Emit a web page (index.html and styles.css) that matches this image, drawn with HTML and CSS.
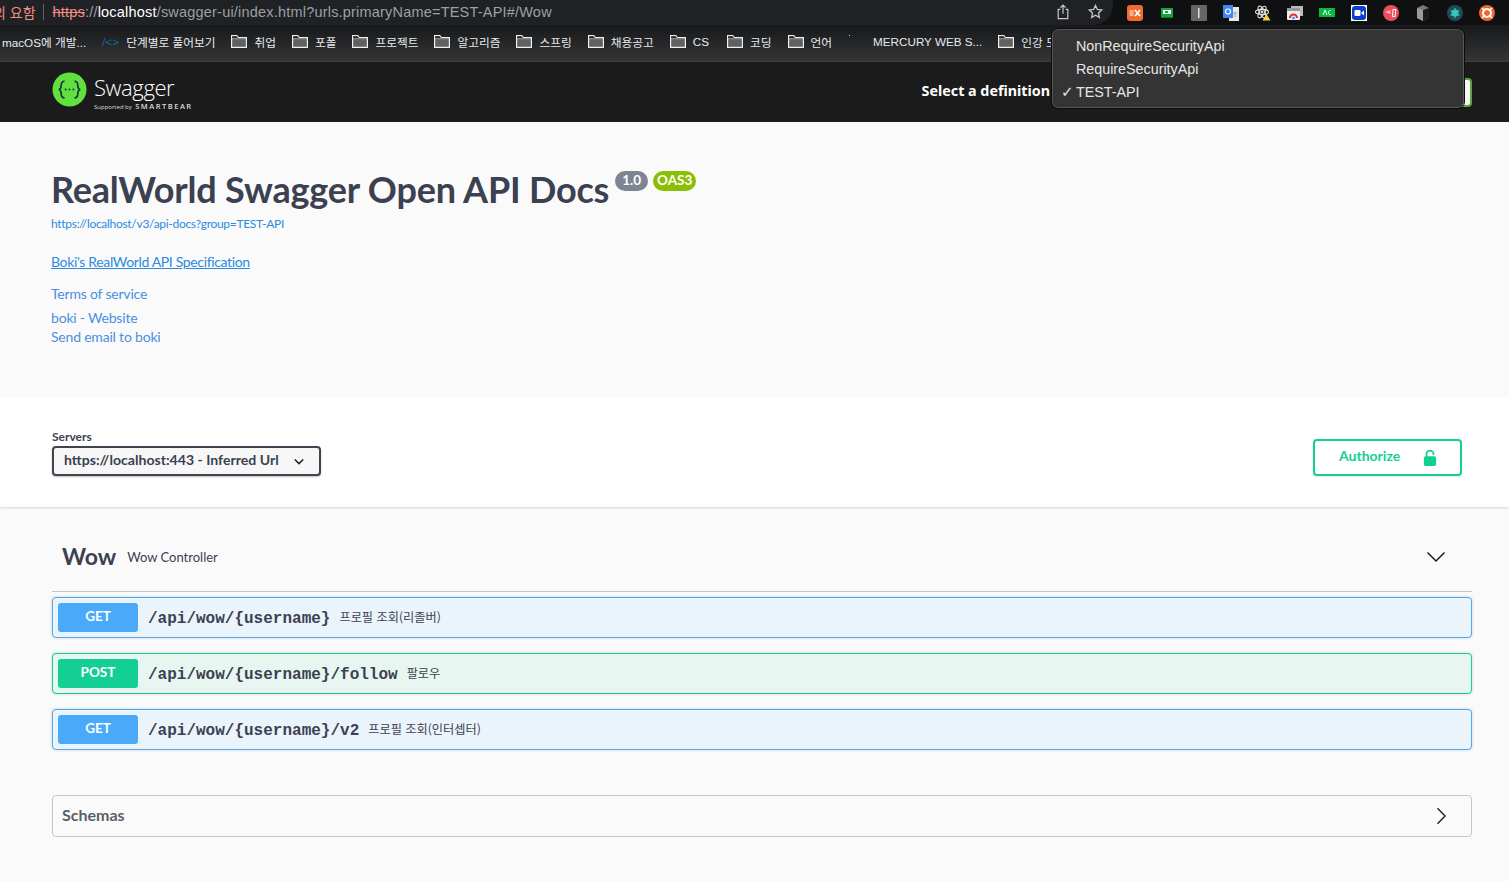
FILE: index.html
```html
<!DOCTYPE html>
<html lang="ko">
<head>
<meta charset="utf-8">
<title>Swagger UI</title>
<link rel="stylesheet" href="styles.css">
</head>
<body>
<header class="chrome">
  <div class="omni">
    <span class="warn">의 요함</span>
    <span class="sep"></span>
    <span class="url"><s class="proto">https</s><span class="dim">://</span><span class="host">localhost</span><span class="dim">/swagger-ui/index.html?urls.primaryName=TEST-API#/Wow</span></span>
    <span class="omni-actions">
      <svg class="act" viewBox="0 0 16 18" width="14" height="16"><path d="M5 6H2.500v10.500h11V6H11M8 11V1.500M5 4l3-3 3 3" fill="none" stroke="#c4c7c5" stroke-width="1.400"/></svg>
      <svg class="act" viewBox="0 0 16 16" width="15" height="15"><path d="M8 1.500l2 4.300 4.700.6-3.500 3.200.9 4.700L8 12l-4.100 2.300.9-4.700L1.300 6.400 6 5.800z" fill="none" stroke="#c4c7c5" stroke-width="1.400"/></svg>
    </span>
  </div>
  <div class="exts">
    <svg class="ext" viewBox="0 0 16 16"><rect width="16" height="16" rx="3" fill="#f26b2e"/><rect x="2.500" y="5" width="4" height="6" fill="#f9b08e"/><path d="M8 5l5 6M13 5l-5 6" stroke="#fff" stroke-width="1.800"/></svg>
    <svg class="ext" viewBox="0 0 16 16"><rect x="2" y="3" width="12" height="9" fill="#0fa83d"/><rect x="4" y="5" width="8" height="4" fill="#fff"/><rect x="6" y="6" width="3" height="2" fill="#0fa83d"/><rect x="2" y="12" width="12" height="1" fill="#0b7a2c"/></svg>
    <svg class="ext" viewBox="0 0 16 16"><rect width="16" height="16" rx="1" fill="#666"/><rect x="7" y="3" width="1.500" height="10" fill="#ddd"/></svg>
    <svg class="ext" viewBox="0 0 16 16"><rect x="6" y="2" width="10" height="14" fill="#e8e8e8"/><rect width="10" height="13" fill="#4285f4"/><circle cx="5" cy="6.500" r="2.500" fill="none" stroke="#fff" stroke-width="1.200"/><path d="M10 8h4M12 8v4" stroke="#8a9ab5"/></svg>
    <svg class="ext" viewBox="0 0 16 16"><g fill="none" stroke="#e4e4e4" stroke-width="1.100"><ellipse cx="7" cy="7" rx="6.500" ry="2.600"/><ellipse cx="7" cy="7" rx="6.500" ry="2.600" transform="rotate(60 7 7)"/><ellipse cx="7" cy="7" rx="6.500" ry="2.600" transform="rotate(120 7 7)"/></g><circle cx="7" cy="7" r="1.400" fill="#e4e4e4"/><path d="M11.500 9l4 6.500h-8z" fill="#f3d23c"/></svg>
    <svg class="ext" viewBox="0 0 16 16"><rect x="4" y="1" width="12" height="10" fill="#bbb"/><rect x="0" y="3" width="13" height="12" rx="1" fill="#eee"/><rect x="0" y="3" width="13" height="3" fill="#999"/><path d="M3 13a3.500 3.500 0 0 1 7 0" fill="none" stroke="#d33" stroke-width="2"/><circle cx="6.500" cy="13" r="1.300" fill="#4285f4"/></svg>
    <svg class="ext" viewBox="0 0 16 16"><rect y="3" width="16" height="9" fill="#09b83e"/><path d="M4 10l2-5 2 5M11.500 5.500h-1l-1 1v2l1 1h1.500" fill="none" stroke="#fff"/></svg>
    <svg class="ext" viewBox="0 0 16 16"><rect width="16" height="16" fill="#fff"/><rect x="1" y="1" width="14" height="14" rx="3" fill="#0b3fc9"/><rect x="3.500" y="5" width="6" height="6" rx="1" fill="#fff"/><path d="M10 8l3-2.500v5z" fill="#fff"/></svg>
    <svg class="ext" viewBox="0 0 16 16"><circle cx="8" cy="8" r="8" fill="#ee4d5a"/><path d="M2 7l6-2-1 2 1 2-4-1z" fill="#fbd"/><path d="M10 4.500h3l-1 7H9.500z" fill="none" stroke="#fff"/></svg>
    <svg class="ext" viewBox="0 0 16 16"><path d="M8 0l6 3v10l-6 3-6-3V3z" fill="#777"/><path d="M8 5l6-2v10l-6 3z" fill="#1b1b1b"/><path d="M2 3l6 2v11l-6-3z" fill="#9a9a9a"/></svg>
    <svg class="ext" viewBox="0 0 16 16"><circle cx="8" cy="8" r="8" fill="#214b56"/><circle cx="8" cy="8" r="3.500" fill="#37c8c0"/><path d="M8 3v10M3.700 5.500l8.600 5M3.700 10.500l8.600-5" stroke="#37c8c0" stroke-width="1.200"/></svg>
    <svg class="ext" viewBox="0 0 16 16"><circle cx="8" cy="8" r="8" fill="#f0672b"/><circle cx="8" cy="8" r="4" fill="none" stroke="#fff" stroke-width="2"/><path d="M3 3l3 3M13 3l-3 3M3 13l3-3M13 13l-3-3" stroke="#fff" stroke-width="1.600"/></svg>
  </div>
</header>

<nav class="bookmarks">
  <span class="bm first">macOS에 개발...</span>
  <span class="bm code"><i class="code-ic">/&lt;&gt;</i>단계별로 풀어보기</span>
  <span class="bm"><svg class="fd" viewBox="0 0 16 13"><use href="#folder"/></svg>취업</span>
  <span class="bm"><svg class="fd" viewBox="0 0 16 13"><use href="#folder"/></svg>포폴</span>
  <span class="bm"><svg class="fd" viewBox="0 0 16 13"><use href="#folder"/></svg>프로젝트</span>
  <span class="bm"><svg class="fd" viewBox="0 0 16 13"><use href="#folder"/></svg>알고리즘</span>
  <span class="bm"><svg class="fd" viewBox="0 0 16 13"><use href="#folder"/></svg>스프링</span>
  <span class="bm"><svg class="fd" viewBox="0 0 16 13"><use href="#folder"/></svg>채용공고</span>
  <span class="bm cs"><svg class="fd" viewBox="0 0 16 13"><use href="#folder"/></svg>CS</span>
  <span class="bm"><svg class="fd" viewBox="0 0 16 13"><use href="#folder"/></svg>코딩</span>
  <span class="bm"><svg class="fd" viewBox="0 0 16 13"><use href="#folder"/></svg>언어</span>
  <span class="bm merc">MERCURY WEB S...</span>
  <span class="bm"><svg class="fd" viewBox="0 0 16 13"><use href="#folder"/></svg>인강 모음</span>
</nav>

<svg class="defs" width="0" height="0">
  <symbol id="folder" viewBox="0 0 16 13"><path d="M.6 12.400V.6h5.200l1.400 2h8.200v9.800z" fill="#5f6062" stroke="#f0f0f0" stroke-width="1.200"/><path d="M.6 3.600h14.800" stroke="#f0f0f0" stroke-width="1"/><path d="M1.200 1.200h4.400l1.300 1.900h7.900v.4H1.200z" fill="#2a2b2d"/></symbol>
</svg>

<section class="topbar">
  <div class="logo">
    <svg class="logo-mark" viewBox="0 0 36 36" width="35" height="35">
      <circle cx="18" cy="18" r="17.500" fill="#62e03e"/>
      <path d="M13 9.500c-3 0-3.500 1.500-3.500 4 0 2.500-.5 4-2.500 4.500 2 .5 2.500 2 2.500 4.500 0 2.500.5 4 3.500 4M23 9.500c3 0 3.500 1.500 3.500 4 0 2.500.5 4 2.500 4.500-2 .5-2.500 2-2.500 4.500 0 2.500-.5 4-3.500 4" fill="none" stroke="#173647" stroke-width="1.700"/>
      <circle cx="14" cy="18" r="1" fill="#173647"/><circle cx="18" cy="18" r="1" fill="#173647"/><circle cx="22" cy="18" r="1" fill="#173647"/>
    </svg>
    <div class="logo-text">
      <span class="logo-name">Swagger</span>
      <span class="logo-sub"><small>Supported by</small> SMARTBEAR</span>
    </div>
  </div>
  <div class="def">
    <span class="def-label">Select a definition</span>
    <span class="def-box"></span>
  </div>
</section>

<section class="info">
  <div class="title-row">
    <h1 class="title">RealWorld Swagger Open API Docs</h1>
    <span class="badge grey">1.0</span>
    <span class="badge green">OAS3</span>
  </div>
  <a class="link spec-url">https://localhost/v3/api-docs?group=TEST-API</a>
  <a class="link desc">Boki's RealWorld API Specification</a>
  <a class="link plain terms">Terms of service</a>
  <a class="link plain site">boki - Website</a>
  <a class="link plain mail">Send email to boki</a>
</section>

<section class="scheme">
  <div class="servers">
    <span class="servers-label">Servers</span>
    <div class="select">
      <span>https://localhost:443 - Inferred Url</span>
      <svg viewBox="0 0 12 8" width="10" height="7"><path d="M1 1.500l5 5 5-5" fill="none" stroke="#222" stroke-width="1.800"/></svg>
    </div>
  </div>
  <button class="authorize">
    <span>Authorize</span>
    <svg viewBox="0 0 16 20" width="14" height="18"><path d="M4 9V5.500a4 4 0 0 1 8 0v1" fill="none" stroke="#13cf93" stroke-width="2"/><rect x="1" y="8" width="14" height="11" rx="2" fill="#13cf93"/></svg>
  </button>
</section>

<main class="ops">
  <div class="tag">
    <div class="tag-left"><h2>Wow</h2><span>Wow Controller</span></div>
    <svg viewBox="0 0 20 12" width="20" height="12"><path d="M1.500 1.500L10 10l8.500-8.500" fill="none" stroke="#1b1b1b" stroke-width="1.500"/></svg>
  </div>
  <div class="op get">
    <span class="method">GET</span>
    <span class="path">/api/wow/{username}</span>
    <span class="summary">프로필 조회(리졸버)</span>
  </div>
  <div class="op post">
    <span class="method">POST</span>
    <span class="path">/api/wow/{username}/follow</span>
    <span class="summary">팔로우</span>
  </div>
  <div class="op get">
    <span class="method">GET</span>
    <span class="path">/api/wow/{username}/v2</span>
    <span class="summary">프로필 조회(인터셉터)</span>
  </div>
  <div class="schemas">
    <span>Schemas</span>
    <svg viewBox="0 0 12 20" width="11" height="18"><path d="M1.500 1.500L10 10l-8.500 8.500" fill="none" stroke="#1b1b1b" stroke-width="1.500"/></svg>
  </div>
</main>

<div class="menu">
  <div class="menu-item">NonRequireSecurityApi</div>
  <div class="menu-item">RequireSecurityApi</div>
  <div class="menu-item checked">TEST-API</div>
</div>
</body>
</html>
```

FILE: styles.css
```css
* { box-sizing: border-box; }
html, body { margin: 0; padding: 0; }
body {
  width: 1509px;
  height: 881px;
  overflow: hidden;
  position: relative;
  background: #fafafa;
  font-family: Lato, "Noto Sans CJK KR", sans-serif;
  color: #3b4151;
}
.defs { position: absolute; }

/* browser chrome */
.chrome {
  height: 25px;
  background: #0f1011;
  display: flex;
  align-items: center;
}
.omni {
  width: 1113px;
  height: 25px;
  background: #202124;
  border-radius: 0 0 20px 0;
  display: flex;
  align-items: center;
  font-family: "Liberation Sans", "Noto Sans CJK KR", sans-serif;
  font-size: 14.500px;
  color: #9aa0a6;
  white-space: nowrap;
  padding-bottom: 2px;
}
.warn { color: #f28b82; font-size: 14px; margin-left: -7px; flex: none; }
.sep { width: 1px; height: 16px; background: #5f6368; margin: 0 9px 0 7px; flex: none; }
.url { flex: 1; letter-spacing: .2px; }
.proto { color: #f28b82; }
.host { color: #fff; }
.dim { color: #9aa0a6; }
.omni-actions { display: flex; align-items: center; gap: 18px; padding-right: 10px; }
.exts {
  display: flex;
  align-items: center;
  gap: 16px;
  padding-left: 14px;
}
.ext { width: 16px; height: 16px; display: block; }

/* bookmarks */
.bookmarks {
  height: 37px;
  background: linear-gradient(#18191a, #333436);
  border-bottom: 1px solid #3d3e40;
  display: flex;
  align-items: center;
  padding: 0 0 3px 2px;
  font-family: "Liberation Sans", "Noto Sans CJK KR", sans-serif;
  font-size: 11.700px;
  color: #e8eaed;
  white-space: nowrap;
  overflow: hidden;
  gap: 16px;
}
.bm { display: flex; align-items: center; gap: 7px; }
.fd { width: 16px; height: 13px; flex: none; }
.code-ic { color: #0b6aa8; font-style: normal; }
.cs { margin-right: 2px; }
.merc { margin-left: 25px; position: relative; }
.merc::before {
  content: "";
  position: absolute;
  left: -24px;
  top: 0;
  width: 1px;
  height: 1px;
  background: #ddd;
}

/* swagger topbar */
.topbar {
  height: 60px;
  background: #1b1b1b;
  display: flex;
  align-items: center;
  justify-content: space-between;
  padding: 0 37px 0 52px;
}
.logo { display: flex; align-items: center; gap: 7px; }
.logo-mark { display: block; margin-bottom: 6px; }
.logo-text { display: flex; flex-direction: column; color: #fff; line-height: 1; }
.logo-name { font-size: 22px; font-weight: 300; font-family: "Open Sans", sans-serif; letter-spacing: -.4px; margin-top: 2px; }
.logo-sub { font-size: 7.500px; font-weight: 600; font-family: "Open Sans", sans-serif; letter-spacing: 1.500px; margin-top: 5px; color: #ddd; }
.logo-sub small { font-size: 6px; letter-spacing: 0; font-weight: 400; }
.def { display: flex; align-items: center; }
.def-label { color: #fff; font-family: "Noto Sans", sans-serif; font-size: 14.300px; font-weight: 700; margin: 0 3px 3px 0; }
.def-box { width: 419px; height: 29px; background: #f7f7f7; border: 2px solid #62a03f; border-radius: 4px; }

/* info */
.info {
  height: 275px;
  padding: 50px 51px 0;
  display: flex;
  flex-direction: column;
  align-items: flex-start;
}
.title-row { display: flex; align-items: flex-start; height: 36px; }
.title { margin: -1px 0 0; font-size: 36px; line-height: 36px; font-weight: 700; letter-spacing: -.2px; color: #3b4151; }
.badge {
  display: block;
  color: #fff;
  font-size: 13.500px;
  font-weight: 700;
  line-height: 17px;
  padding: 1px 4px;
  border-radius: 57px;
  margin-top: -1px;
  height: 20px;
}
.grey { background: #7d8492; margin-left: 6px; padding: 1px 7px; }
.green { background: #89bf04; margin-left: 5px; }
.link { color: #4990e2; display: block; font-size: 14px; line-height: 19px; }
.spec-url { color: #2a8be0; font-size: 12px; letter-spacing: -.3px; line-height: 14px; margin-top: 9px; }
.desc { color: #2a8be0; font-size: 14px; letter-spacing: -.35px; text-decoration: underline; margin-top: 21px; }
.plain { color: #4990e2; font-size: 14px; letter-spacing: -.2px; }
.terms { margin-top: 13px; }
.site { margin-top: 5px; }

/* servers bar */
.scheme {
  height: 110px;
  background: #fff;
  box-shadow: 0 1px 2px rgba(0,0,0,.15);
  display: flex;
  justify-content: space-between;
  padding: 32px 47px 0 52px;
  position: relative;
}
.servers-label { display: block; font-size: 12px; font-weight: 700; line-height: 15px; margin-bottom: 2px; }
.select {
  width: 269px;
  height: 30px;
  background: #f7f7f7;
  border: 2px solid #41444e;
  border-radius: 4px;
  box-shadow: 0 1px 2px 0 rgba(0,0,0,.25);
  display: flex;
  align-items: center;
  justify-content: space-between;
  padding: 0 15px 3px 10px;
  font-size: 14.100px;
  font-weight: 700;
  white-space: nowrap;
}
.select svg { margin-top: 3px; }
.authorize {
  width: 149px;
  height: 37px;
  margin-top: 10px;
  background: transparent;
  border: 2px solid #13cf93;
  border-radius: 4px;
  display: flex;
  align-items: center;
  gap: 23px;
  padding: 0 0 0 24px;
  color: #13cf93;
  font: 700 14px Lato, sans-serif;
  box-shadow: 0 1px 2px rgba(0,0,0,.1);
}
.authorize span { margin-bottom: 5px; }

/* operations */
.ops { padding: 0 37px 0 52px; }
.tag {
  height: 85px;
  border-bottom: 1px solid #c4c5c9;
  display: flex;
  align-items: center;
  justify-content: space-between;
  padding: 16px 26px 0 10px;
}
.tag-left { display: flex; align-items: center; gap: 11px; margin-top: -3px; }
.tag-left h2 { margin: 0; font-size: 23px; font-weight: 700; color: #3b4151; }
.tag-left span { font-size: 13px; margin-top: 2px; }
.op {
  height: 41px;
  border: 1px solid;
  border-radius: 4px;
  box-shadow: 0 0 3px rgba(0,0,0,.19);
  display: flex;
  align-items: center;
  padding: 0 5px;
  margin-bottom: 15px;
}
.tag + .op { margin-top: 5px; }
.get { background: #ebf3fb; border-color: #49aafa; }
.post { background: #e7f6f0; border-color: #13cf93; }
.method {
  width: 80px;
  height: 29px;
  border-radius: 3px;
  color: #fff;
  font-size: 13.500px;
  font-weight: 700;
  display: flex;
  align-items: center;
  justify-content: center;
  padding-bottom: 3px;
}
.get .method { background: #49aafa; }
.post .method { background: #13cf93; }
.path {
  font-family: "Liberation Mono", monospace;
  font-size: 16px;
  font-weight: 700;
  margin: 2px 0 0 10px;
  color: #3b4151;
}
.summary {
  font-family: "Noto Sans CJK KR", sans-serif;
  font-size: 12.200px;
  color: #3b4151;
  margin: 0 0 1px 9px;
}
.schemas {
  height: 42px;
  margin-top: 45px;
  border: 1px solid #c4c5c9;
  border-radius: 4px;
  display: flex;
  align-items: center;
  justify-content: space-between;
  padding: 0 24px 0 9px;
  font-size: 16px;
  font-weight: 700;
  color: #5a5e69;
}
.schemas span { margin-bottom: 4px; }

/* native menu */
.menu {
  position: absolute;
  left: 1052px;
  top: 29px;
  width: 412px;
  height: 79px;
  padding: 5px 0;
  background: #343434;
  border: 1px solid #565656;
  outline: 1px solid #0c0c0c;
  border-radius: 6px;
  font-family: "Liberation Sans", sans-serif;
  font-size: 14.300px;
  color: #e6e6e6;
}
.menu-item { height: 23px; line-height: 23px; padding-left: 23px; position: relative; }
.checked::before {
  content: "✓";
  position: absolute;
  left: 8px;
  font-family: "DejaVu Sans", sans-serif;
  font-size: 15px;
}
```
